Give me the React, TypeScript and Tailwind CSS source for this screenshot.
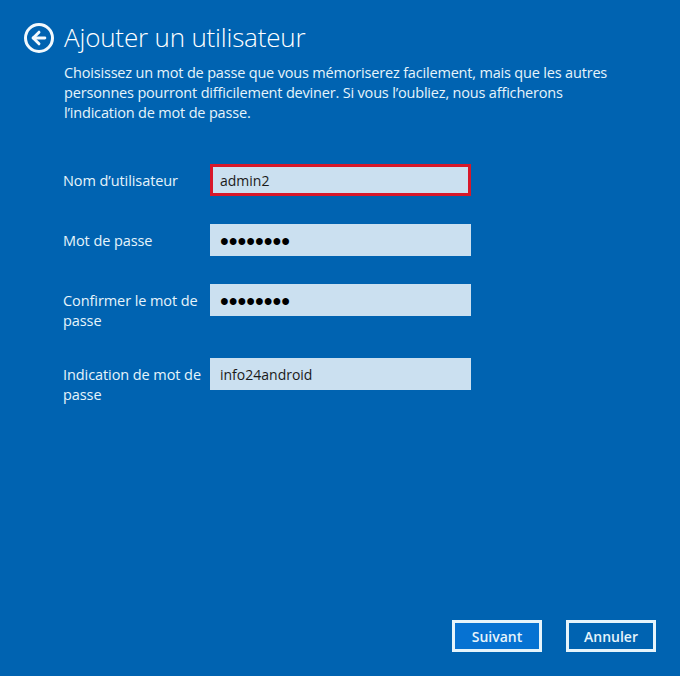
import React from "react";
import { ArrowLeft } from "lucide-react";

const fields = [
  { label: "Nom d’utilisateur", value: "admin2", focus: true },
  { label: "Mot de passe", value: "••••••••", secret: true },
  { label: "Confirmer le mot de passe", value: "••••••••", secret: true },
  { label: "Indication de mot de passe", value: "info24android" },
];

const App = () => {
  return (
    <div className="w-[680px] h-[676px] flex flex-col bg-[#0063b1] text-[#e6f4fb] font-['Open_Sans',sans-serif] overflow-hidden">
      {/* Header */}
      <div className="flex items-center pl-6 pt-[22px]">
        <div className="w-[30px] h-[30px] rounded-full border-[3px] border-[#f2f9fd] flex items-center justify-center">
          <ArrowLeft size={20} strokeWidth={3.5} className="text-[#f2f9fd]" />
        </div>
        <h1 className="ml-[10px] -mt-[1px] mb-[1px] text-[26px] leading-[32px] tracking-[-0.18px] font-light text-white">
          Ajouter un utilisateur
        </h1>
      </div>

      <p className="ml-[64px] mt-[9px] w-[560px] text-[14.5px] leading-[20px] tracking-[-0.18px]">
        Choisissez un mot de passe que vous mémoriserez facilement, mais que les autres personnes
        pourront difficilement deviner. Si vous l’oubliez, nous afficherons l’indication de mot de
        passe.
      </p>

      {/* Form */}
      <div className="ml-[63px] mt-[41px] flex flex-col gap-[28px]">
        {fields.map((f) => (
          <div key={f.label} className="flex items-start">
            <label className="w-[147px] pt-[7px] -mb-[1px] text-[14.5px] leading-[20px] tracking-[-0.08px]">
              {f.label}
            </label>
            <div
              className={`w-[261px] h-[32px] flex items-center bg-[#cbe0f0] ${
                f.focus ? "border-[3px] border-[#d7182a] pl-[7px]" : "pl-[10px]"
              } ${
                f.secret
                  ? "pt-[2px] font-['Liberation_Sans',sans-serif] text-[25px] leading-none text-black"
                  : "text-[14px] text-[#1a1a1a]"
              }`}
            >
              {f.value}
            </div>
          </div>
        ))}
      </div>

      {/* Buttons */}
      <div className="mt-auto mb-6 mr-6 flex justify-end gap-6">
        <button className="w-[90px] h-[32px] border-[3px] border-[#e6f4fb] bg-[#0672d2] text-[14px] font-semibold">
          Suivant
        </button>
        <button className="w-[90px] h-[32px] border-[3px] border-[#e6f4fb] text-[14px] font-semibold">
          Annuler
        </button>
      </div>
    </div>
  );
};

export default App;
